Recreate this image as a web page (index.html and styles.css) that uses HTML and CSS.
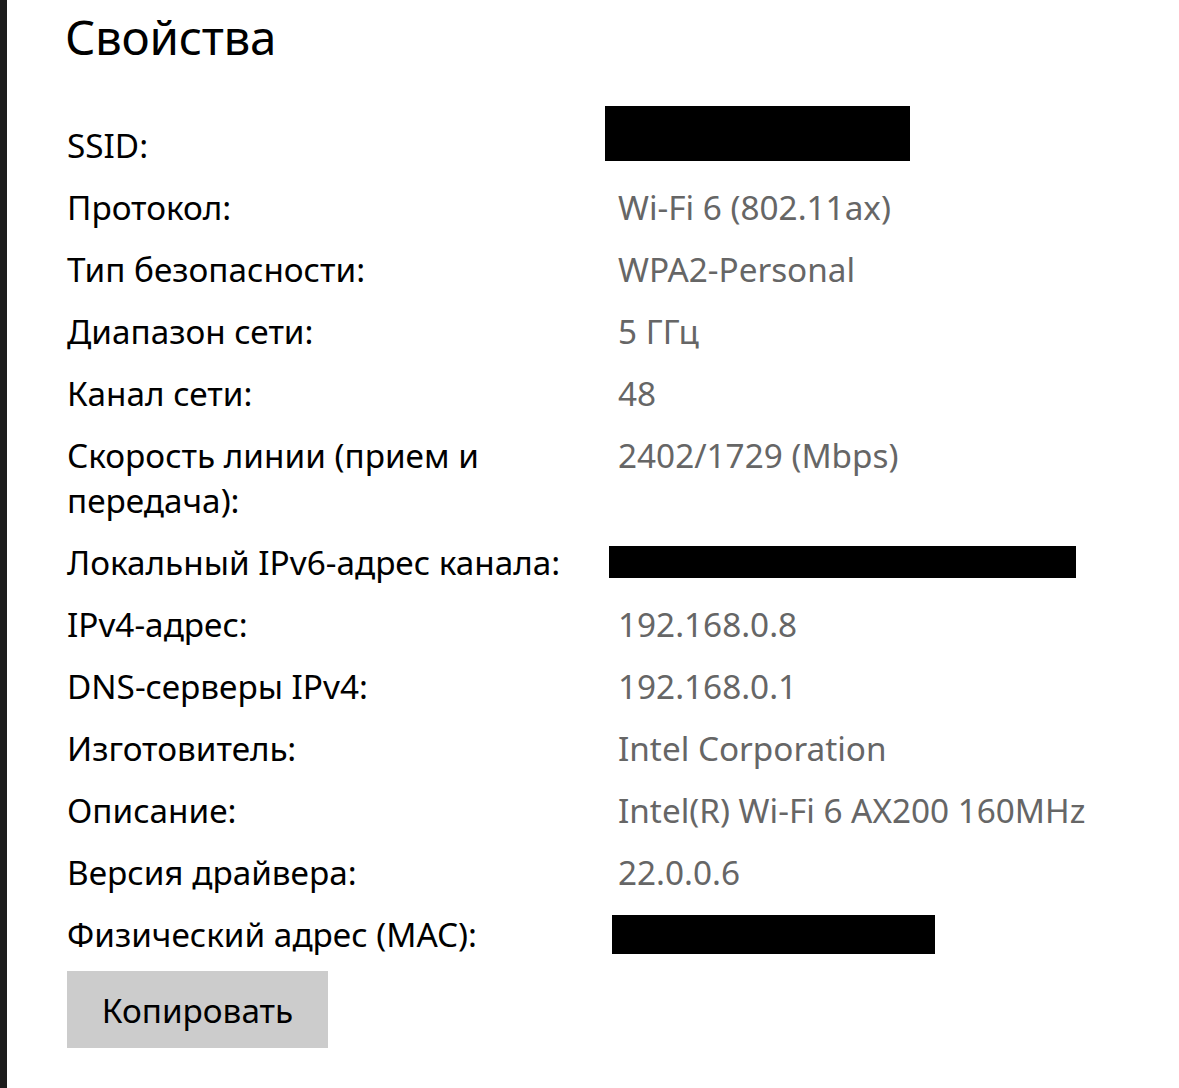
FILE: index.html
```html
<!DOCTYPE html>
<html lang="ru">
<head>
<meta charset="utf-8">
<title>Свойства</title>
<link rel="stylesheet" href="styles.css">
</head>
<body>
<div class="edge"></div>
<main class="panel">
  <h1 class="title">Свойства</h1>
  <dl class="props">
    <dt>SSID:</dt><dd><span class="mask mask-ssid"></span></dd>
    <dt>Протокол:</dt><dd>Wi-Fi 6 (802.11ax)</dd>
    <dt>Тип безопасности:</dt><dd>WPA2-Personal</dd>
    <dt>Диапазон сети:</dt><dd>5 ГГц</dd>
    <dt>Канал сети:</dt><dd>48</dd>
    <dt>Скорость линии (прием и передача):</dt><dd>2402/1729 (Mbps)</dd>
    <dt>Локальный IPv6-адрес канала:</dt><dd><span class="mask mask-ipv6"></span></dd>
    <dt>IPv4-адрес:</dt><dd>192.168.0.8</dd>
    <dt>DNS-серверы IPv4:</dt><dd>192.168.0.1</dd>
    <dt>Изготовитель:</dt><dd>Intel Corporation</dd>
    <dt>Описание:</dt><dd>Intel(R) Wi-Fi 6 AX200 160MHz</dd>
    <dt>Версия драйвера:</dt><dd>22.0.0.6</dd>
    <dt>Физический адрес (MAC):</dt><dd><span class="mask mask-mac"></span></dd>
  </dl>
  <button class="copy" type="button">Копировать</button>
</main>
</body>
</html>
```

FILE: styles.css
```css
html, body {
  margin: 0;
  padding: 0;
  background: #ffffff;
}
body {
  display: flex;
  min-height: 1088px;
  font-family: "Noto Sans", "Open Sans", sans-serif;
  color: #000;
}
.edge {
  width: 7px;
  flex: none;
  background: #1c1c1c;
}
.panel {
  flex: 1;
  padding-left: 60px;
}
.title {
  margin: 7px 0 0 -2px;
  height: 116px;
  font-size: 47.5px;
  font-weight: 400;
  line-height: 60px;
  letter-spacing: -0.3px;
}
.props {
  display: grid;
  grid-template-columns: 551px 1fr;
  row-gap: 17px;
  margin: 0;
  font-size: 33.3px;
  line-height: 45px;
}
.props dt {
  margin: 0;
  padding-right: 30px;
}
.props dd {
  margin: 0;
  color: #666666;
}
.mask {
  display: block;
  background: #000;
}
.mask-ssid {
  width: 305px;
  height: 55px;
  margin: -17px 0 0 -13px;
}
.mask-ipv6 {
  width: 467px;
  height: 32px;
  margin: 6px 0 0 -9px;
}
.mask-mac {
  width: 323px;
  height: 39px;
  margin: 3px 0 0 -6px;
}
.copy {
  display: block;
  margin-top: 14px;
  width: 261px;
  height: 77px;
  border: none;
  background: #cccccc;
  color: #000;
  font-family: "Noto Sans", "Open Sans", sans-serif;
  font-size: 33.3px;
  padding: 0;
}
```
